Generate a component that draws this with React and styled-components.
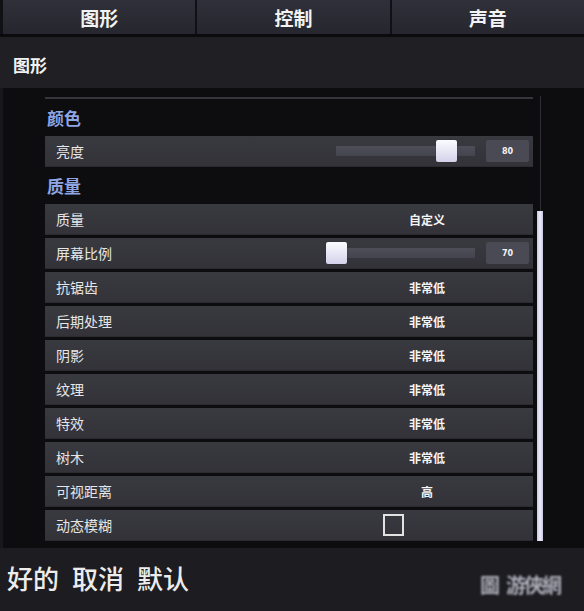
import React from "react";
import styled, { createGlobalStyle } from "styled-components";

const Global = createGlobalStyle`
  html, body { margin: 0; padding: 0; background: #151518; }
  body { font-family: "Noto Sans CJK SC", "Noto Sans", sans-serif; }
  * { box-sizing: border-box; }
`;

const Screen = styled.div`
  width: 584px;
  height: 611px;
  display: flex;
  flex-direction: column;
  overflow: hidden;
  background: #18181c;
`;

const TabBar = styled.div`
  height: 34px;
  padding-left: 3px;
  display: grid;
  grid-template-columns: 1fr 1fr 1fr;
  column-gap: 2px;
  background: #111115;
`;

const Tab = styled.div`
  display: flex;
  align-items: center;
  justify-content: center;
  background: linear-gradient(#30303a, #26262e);
  color: #f2f2f2;
  font-size: 19px;
  font-weight: 700;
  padding-top: 1px;
`;

const TabRule = styled.div`
  height: 3px;
  background: #0b0b0e;
`;

const Header = styled.div`
  height: 51px;
  padding: 4px 0 0 13px;
  display: flex;
  align-items: center;
  background: #1f1f24;
  color: #f2f2f2;
  font-size: 17px;
  font-weight: 700;
`;

const Content = styled.div`
  height: 460px;
  margin-left: 3px;
  padding: 8px 0 0 42px;
  display: flex;
  align-items: flex-start;
  background: #0d0d10;
`;

const List = styled.div`
  width: 488px;
  display: flex;
  flex-direction: column;
`;

const TopRule = styled.div`
  margin-top: 1px;
  height: 2px;
  background: #35353c;
`;

const SectionTitle = styled.div`
  height: 37px;
  padding: 0 0 1px 2px;
  display: flex;
  align-items: center;
  color: #8fa5e4;
  font-size: 17px;
  font-weight: 700;
`;

const RowGroup = styled.div`
  display: flex;
  flex-direction: column;
  gap: 3px;
`;

const Row = styled.div`
  height: 31px;
  padding: 0 4px 1px 11px;
  display: flex;
  align-items: center;
  background: linear-gradient(#393940, #323238);
  box-shadow: inset 0 -1px 0 #2a2a30;
`;

const Label = styled.div`
  flex: 1;
  color: #e6e6e6;
  font-size: 14px;
`;

const Value = styled.div`
  width: 120px;
  margin-right: 42px;
  text-align: center;
  color: #f4f4f4;
  font-size: 12px;
  font-weight: 700;
`;

const Track = styled.div`
  position: relative;
  width: ${(p) => p.$w}px;
  height: 10px;
  margin-right: 11px;
  background: linear-gradient(#4e4e59, #44444e);
`;

const Thumb = styled.div`
  position: absolute;
  top: -6px;
  width: 21px;
  height: 22px;
  border-radius: 2px;
  background: linear-gradient(#fbfbff, #d4d2ea);
  box-shadow: 0 0 1px rgba(0, 0, 0, 0.6);
`;

const NumBox = styled.div`
  width: 43px;
  height: 22px;
  display: flex;
  align-items: center;
  justify-content: center;
  border-radius: 2px;
  background: #4a4a55;
  color: #f4f4f4;
  font-family: "DejaVu Sans", sans-serif;
  font-size: 8px;
  font-weight: 700;
`;

const CheckBox = styled.div`
  width: 21px;
  height: 22px;
  margin-right: 125px;
  border: 2px solid #e2e2e2;
`;

const ScrollBar = styled.div`
  position: relative;
  width: 6px;
  height: 445px;
  margin-left: 4px;
  display: flex;
  justify-content: center;
`;

const ScrollTrack = styled.div`
  width: 1px;
  height: 100%;
  background: #2e2e34;
`;

const ScrollThumb = styled.div`
  position: absolute;
  left: 0;
  top: 115px;
  width: 6px;
  height: 330px;
  background: linear-gradient(90deg, #c9c7e2, #eeedfa, #c9c7e2);
`;

const Footer = styled.div`
  height: 63px;
  padding: 0 24px 5px 7px;
  display: flex;
  align-items: center;
  background: #1c1c21;
`;

const FooterButton = styled.div`
  color: #ececec;
  font-size: 26px;
  font-weight: 500;
  margin-right: 13px;
`;

const Watermark = styled.div`
  margin-left: auto;
  margin-top: 14px;
  display: flex;
  gap: 8px;
  color: #c8c8d4;
  font-size: 20px;
  font-weight: 700;
  letter-spacing: -2px;
  filter: blur(1px);
  opacity: 0.85;
`;

const Slider = ({ value, min, max, width }) => {
  const pos = ((value - min) / (max - min)) * (width - 21);
  return (
    <>
      <Track $w={width}>
        <Thumb style={{ left: pos }} />
      </Track>
      <NumBox>{value}</NumBox>
    </>
  );
};

const qualityRows = [
  ["质量", "自定义"],
  ["屏幕比例", { slider: true, value: 70, min: 70, max: 100, width: 149 }],
  ["抗锯齿", "非常低"],
  ["后期处理", "非常低"],
  ["阴影", "非常低"],
  ["纹理", "非常低"],
  ["特效", "非常低"],
  ["树木", "非常低"],
  ["可视距离", "高"],
  ["动态模糊", { check: true }],
];

export default function App() {
  return (
    <>
      <Global />
      <Screen>
        <TabBar>
          <Tab>图形</Tab>
          <Tab>控制</Tab>
          <Tab>声音</Tab>
        </TabBar>
        <TabRule />
        <Header>图形</Header>
        <Content>
          <List>
            <TopRule />
            <SectionTitle>颜色</SectionTitle>
            <Row>
              <Label>亮度</Label>
              <Slider value={80} min={0} max={94} width={139} />
            </Row>
            <SectionTitle>质量</SectionTitle>
            <RowGroup>
              {qualityRows.map(([label, v]) => (
                <Row key={label}>
                  <Label>{label}</Label>
                  {typeof v === "string" ? (
                    <Value>{v}</Value>
                  ) : v.slider ? (
                    <Slider value={v.value} min={v.min} max={v.max} width={v.width} />
                  ) : (
                    <CheckBox />
                  )}
                </Row>
              ))}
            </RowGroup>
          </List>
          <ScrollBar>
            <ScrollTrack />
            <ScrollThumb />
          </ScrollBar>
        </Content>
        <Footer>
          <FooterButton>好的</FooterButton>
          <FooterButton>取消</FooterButton>
          <FooterButton>默认</FooterButton>
          <Watermark>
            <span>圖</span>
            <span>游俠網</span>
          </Watermark>
        </Footer>
      </Screen>
    </>
  );
}
